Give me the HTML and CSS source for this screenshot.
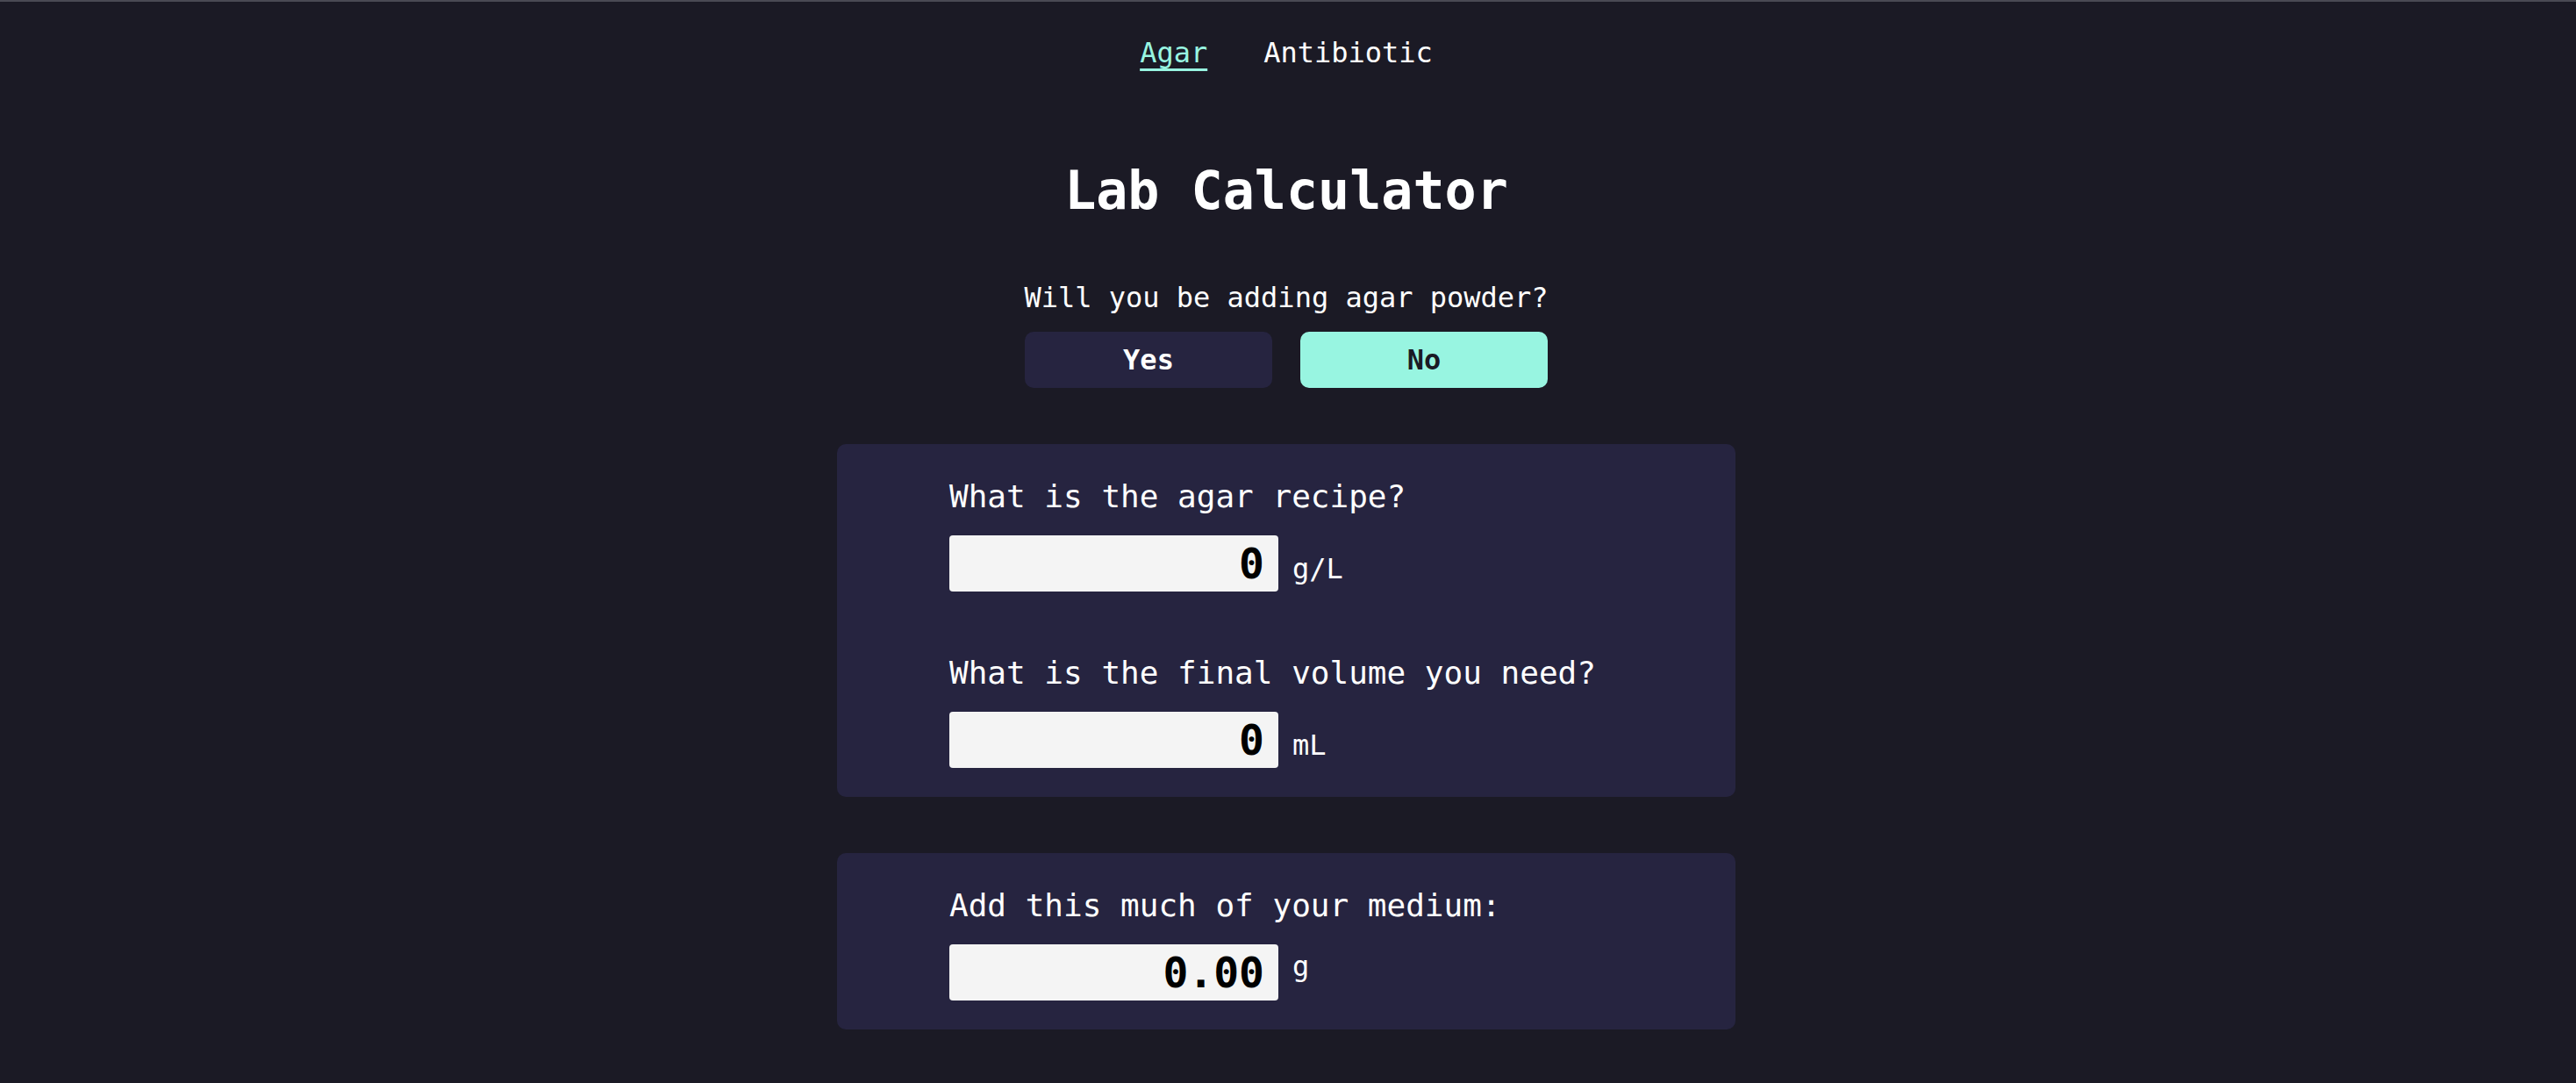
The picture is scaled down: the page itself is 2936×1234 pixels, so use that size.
FILE: index.html
```html
<!DOCTYPE html>
<html lang="en">
<head>
    <meta charset="UTF-8">
    <meta name="viewport" content="width=device-width, initial-scale=1.0">
    <title>Lab Calculator</title>
    <link rel="stylesheet" href="styles.css">
</head>
<body>
    <nav class="tabs">
        <a href="#" class="tab active">Agar</a>
        <a href="#" class="tab">Antibiotic</a>
    </nav>

    <main class="calc">
        <h1>Lab Calculator</h1>

        <div class="question">
            <p>Will you be adding agar powder?</p>
            <div class="toggle">
                <button class="toggle-btn">Yes</button>
                <button class="toggle-btn selected">No</button>
            </div>
        </div>

        <section class="panel">
            <div class="field">
                <label for="recipe">What is the agar recipe?</label>
                <div class="row">
                    <input type="number" id="recipe" value="0">
                    <span class="unit">g/L</span>
                </div>
            </div>
            <div class="field">
                <label for="volume">What is the final volume you need?</label>
                <div class="row">
                    <input type="number" id="volume" value="0">
                    <span class="unit">mL</span>
                </div>
            </div>
        </section>

        <section class="panel result">
            <div class="field">
                <label>Add this much of your medium:</label>
                <div class="row">
                    <output class="value" id="amount">0.00</output>
                    <span class="unit">g</span>
                </div>
            </div>
        </section>
    </main>
</body>
</html>
```

FILE: styles.css
```css
body {
    margin: 0;
    padding-right: 4px;
    min-height: 100vh;
    box-sizing: border-box;
    border-top: 2px solid #4a4a54;
    background-color: #1b1a25;
    color: #fff;
    font-family: "DejaVu Sans Mono", monospace;
    font-size: 32px;
}
.tabs {
    display: flex;
    justify-content: center;
    gap: 64px;
    padding-top: 39px;
}
.tab {
    color: #fff;
    text-decoration: none;
}
.tab.active {
    color: #98f5e1;
    text-decoration: underline;
    text-decoration-thickness: 3px;
    text-underline-offset: 7px;
}
h1 {
    margin: 103px 0 0;
    font-size: 60px;
    text-align: center;
}
.question {
    display: flex;
    flex-direction: column;
    align-items: center;
    margin-top: 68px;
}
.question p {
    margin: 0;
}
.toggle {
    display: flex;
    gap: 32px;
    margin-top: 20px;
}
.toggle-btn {
    width: 282px;
    height: 64px;
    border: none;
    border-radius: 10px;
    background-color: #262440;
    color: #fff;
    font-family: inherit;
    font-size: 32px;
    font-weight: bold;
    cursor: pointer;
}
.toggle-btn.selected {
    background-color: #98f5e1;
    color: #1b1a25;
}
.panel {
    width: 1024px;
    box-sizing: border-box;
    margin: 64px auto 0;
    padding: 39px 0 33px 128px;
    background-color: #262440;
    border-radius: 10px;
}
.field + .field {
    margin-top: 72px;
}
label {
    display: block;
    font-size: 36px;
}
.row {
    display: flex;
    align-items: baseline;
    gap: 16px;
    margin-top: 24px;
}
input, .value {
    width: 375px;
    height: 64px;
    box-sizing: border-box;
    padding: 0 16px;
    border: none;
    border-radius: 4px;
    background-color: #f4f4f4;
    color: #000;
    font-family: inherit;
    font-size: 48px;
    font-weight: bold;
    text-align: right;
}
input::-webkit-inner-spin-button,
input::-webkit-outer-spin-button {
    -webkit-appearance: none;
    margin: 0;
}
.value {
    display: flex;
    align-items: center;
    justify-content: flex-end;
}
.result .unit {
    align-self: flex-start;
    margin-top: 6px;
}
```
